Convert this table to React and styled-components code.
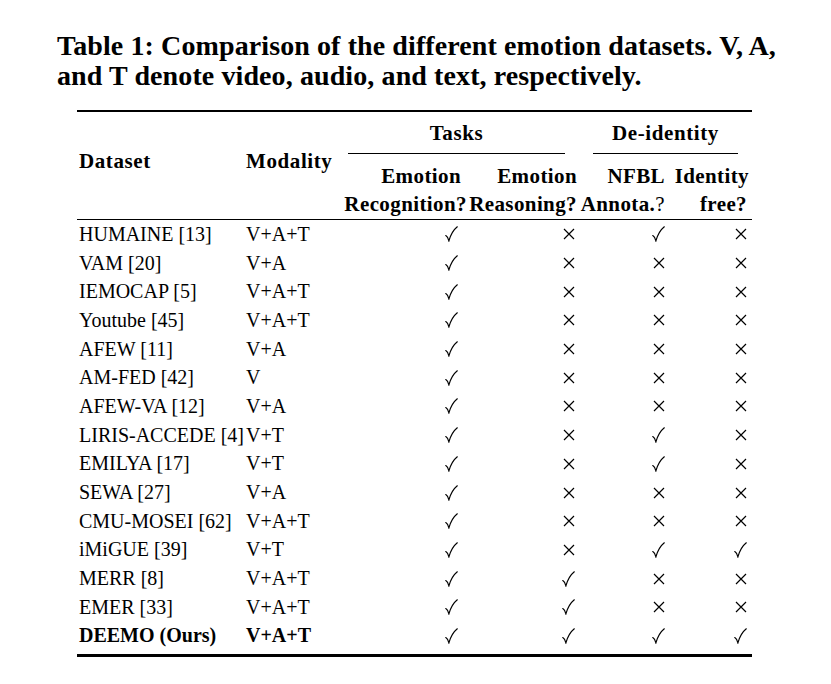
import React from 'react';
import styled, {createGlobalStyle} from 'styled-components';

const GlobalStyle = createGlobalStyle`
body {
  margin: 0;
  background: #fff;
}
`;

const COLS = '166px 93px 132px 110px 88px 86px';

const Page = styled.div`
padding: 31px 0 0 57px;
font-family: "Liberation Serif", "Times New Roman", serif;
color: #000;
`;

const Caption = styled.div`
font-size: 28px;
font-weight: bold;
line-height: 30px;
letter-spacing: 0.1px;
`;

const Table = styled.div`
margin: 19px 0 0 20px;
width: 675px;
border-top: 2px solid #000;
border-bottom: 3px solid #000;
padding-bottom: 4px;
font-size: 20px;
`;

const Head = styled.div`
display: grid;
grid-template-columns: ${COLS};
grid-template-rows: 42px 65px;
border-bottom: 1px solid #000;
font-weight: bold;
font-size: 21px;
letter-spacing: 0.6px;
`;

const SpanHead = styled.div`
grid-row: 1 / 3;
padding: 35px 0 0 ${p => p.$left}px;
line-height: 28px;
`;

const GroupHead = styled.div`
grid-column: span 2;
display: flex;
flex-direction: column;
justify-content: flex-end;
padding: 0 ${p => p.$right}px 0 ${p => p.$left}px;
`;

const GroupLabel = styled.div`
text-align: center;
line-height: 28px;
padding-bottom: 6px;
border-bottom: 1px solid #000;
`;

const SubHead = styled.div`
padding: 8px ${p => p.$right}px 0 0;
text-align: right;
line-height: 28px;
white-space: nowrap;
letter-spacing: 0.4px;
`;

const HeadLine = styled.div`
padding-right: ${p => p.$right || 0}px;
`;

const Light = styled.span`
font-weight: normal;
`;

const Row = styled.div`
display: grid;
grid-template-columns: ${COLS};
height: 28.7px;
align-items: center;
font-weight: ${p => (p.$bold ? 'bold' : 'normal')};
`;

const TextCell = styled.div`
padding-left: ${p => p.$left}px;
white-space: nowrap;
`;

const MarkCell = styled.div`
display: flex;
justify-content: flex-end;
align-items: center;
padding-right: ${p => p.$right}px;
`;

const Check = () => (
    <svg width="13" height="16" viewBox="0 0 13 16">
        <path d="M0.8 9.6 C2.2 10.4 3.1 11.8 3.9 14.8 C5.6 9 8.3 4 12.3 0.8"
              fill="none" stroke="#000" strokeWidth="1.2" strokeLinecap="round"/>
    </svg>
);

const Cross = () => (
    <svg width="12" height="12" viewBox="0 0 12 12">
        <path d="M1 1 L11 11 M11 1 L1 11" stroke="#000" strokeWidth="1.2"/>
    </svg>
);

const markPads = [10, 3, 1, 5];

const datasets = [
    ['HUMAINE [13]', 'V+A+T', 1, 0, 1, 0],
    ['VAM [20]', 'V+A', 1, 0, 0, 0],
    ['IEMOCAP [5]', 'V+A+T', 1, 0, 0, 0],
    ['Youtube [45]', 'V+A+T', 1, 0, 0, 0],
    ['AFEW [11]', 'V+A', 1, 0, 0, 0],
    ['AM-FED [42]', 'V', 1, 0, 0, 0],
    ['AFEW-VA [12]', 'V+A', 1, 0, 0, 0],
    ['LIRIS-ACCEDE [4]', 'V+T', 1, 0, 1, 0],
    ['EMILYA [17]', 'V+T', 1, 0, 1, 0],
    ['SEWA [27]', 'V+A', 1, 0, 0, 0],
    ['CMU-MOSEI [62]', 'V+A+T', 1, 0, 0, 0],
    ['iMiGUE [39]', 'V+T', 1, 0, 1, 1],
    ['MERR [8]', 'V+A+T', 1, 1, 0, 0],
    ['EMER [33]', 'V+A+T', 1, 1, 0, 0],
    ['DEEMO (Ours)', 'V+A+T', 1, 1, 1, 1],
];

const App = () => {
    return (
        <Page>
            <GlobalStyle/>
            <Caption>
                Table 1: Comparison of the different emotion datasets. V, A,<br/>
                and T denote video, audio, and text, respectively.
            </Caption>
            <Table>
                <Head>
                    <SpanHead $left={2}>Dataset</SpanHead>
                    <SpanHead $left={3}>Modality</SpanHead>
                    <GroupHead $left={12} $right={13}><GroupLabel>Tasks</GroupLabel></GroupHead>
                    <GroupHead $left={15} $right={14}><GroupLabel>De-identity</GroupLabel></GroupHead>
                    <SubHead $right={1}>
                        <HeadLine $right={6}>Emotion</HeadLine>
                        <HeadLine>Recognition?</HeadLine>
                    </SubHead>
                    <SubHead $right={1}>
                        <HeadLine>Emotion</HeadLine>
                        <HeadLine>Reasoning?</HeadLine>
                    </SubHead>
                    <SubHead $right={1}>
                        <HeadLine>NFBL</HeadLine>
                        <HeadLine>Annota.<Light>?</Light></HeadLine>
                    </SubHead>
                    <SubHead $right={3}>
                        <HeadLine>Identity</HeadLine>
                        <HeadLine $right={2}>free?</HeadLine>
                    </SubHead>
                </Head>
                {datasets.map((d, i) => (
                    <Row key={d[0]} $bold={i === datasets.length - 1}>
                        <TextCell $left={2}>{d[0]}</TextCell>
                        <TextCell $left={3}>{d[1]}</TextCell>
                        {d.slice(2).map((m, j) => (
                            <MarkCell key={j} $right={markPads[j]}>
                                {m ? <Check/> : <Cross/>}
                            </MarkCell>
                        ))}
                    </Row>
                ))}
            </Table>
        </Page>
    );
};

export default App;
